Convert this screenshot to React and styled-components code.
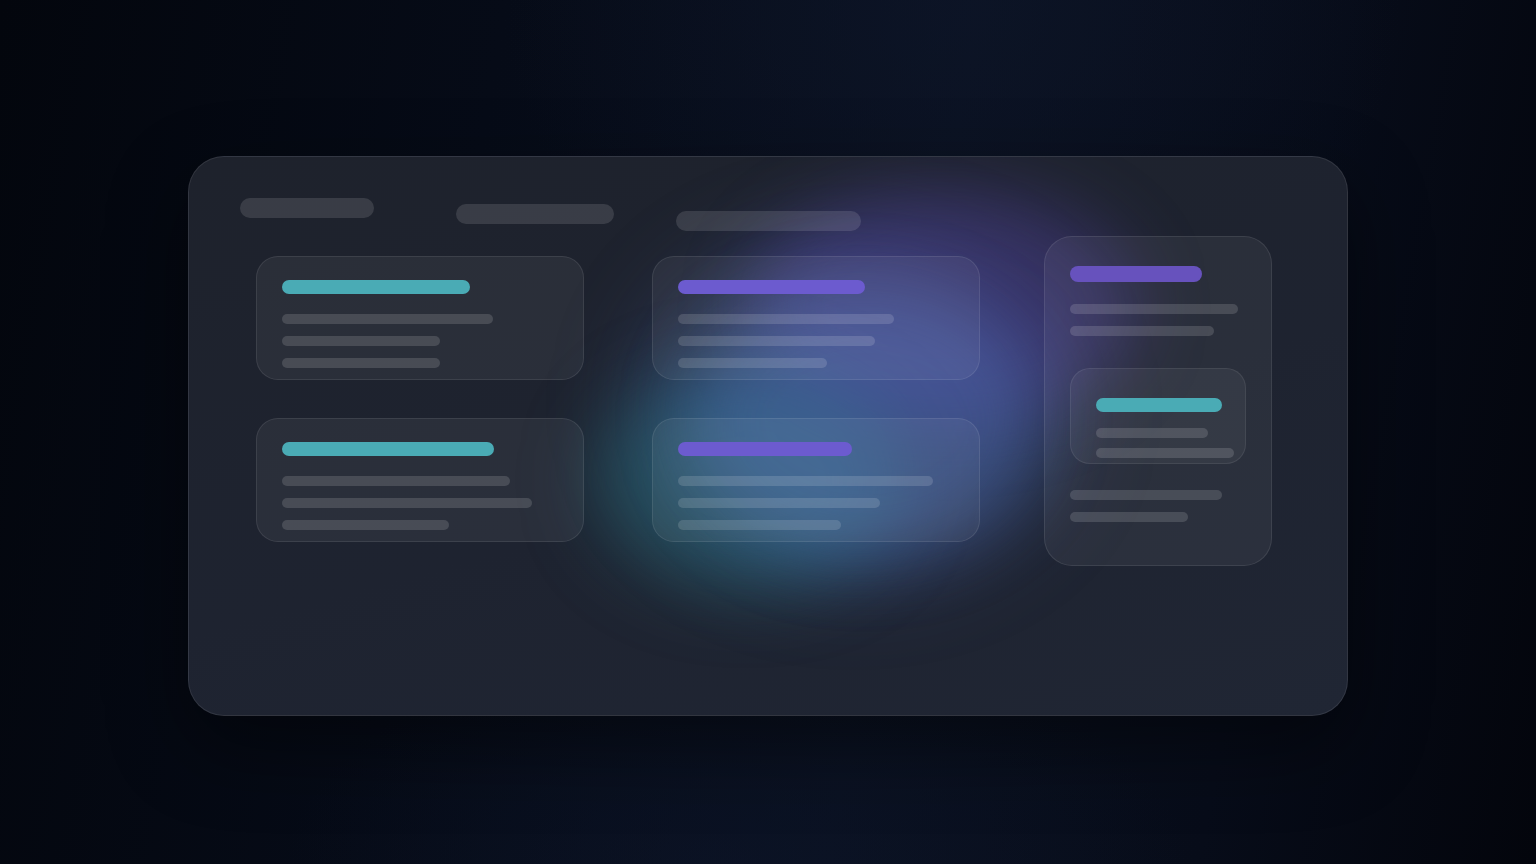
import React from 'react';
import styled, { createGlobalStyle } from 'styled-components';

const GlobalStyle = createGlobalStyle`
  html, body {
    margin: 0;
    padding: 0;
    height: 100%;
  }
  body {
    font-family: "Inter", "Liberation Sans", sans-serif;
    background: #050913;
  }
  #root {
    height: 100%;
  }
`;

const Page = styled.div`
  width: 100vw;
  height: 100vh;
  display: flex;
  align-items: center;
  justify-content: center;
  overflow: hidden;
  background:
    radial-gradient(ellipse 600px 500px at 62% 0%, rgba(14, 22, 42, 0.6), transparent 75%),
    radial-gradient(ellipse 600px 300px at 48% 100%, rgba(12, 20, 40, 0.6), transparent 75%),
    linear-gradient(100deg, #03060d 0%, #060b17 30%, #0a1120 58%, #070c19 80%, #03050c 100%);
`;

const Panel = styled.div`
  position: relative;
  box-sizing: border-box;
  width: 1160px;
  height: 560px;
  margin-top: 8px;
  padding: 41px 51px;
  border-radius: 36px;
  border: 1px solid rgba(255, 255, 255, 0.09);
  background: linear-gradient(165deg, #1e222c 0%, #1e2330 55%, #202634 100%);
  box-shadow: 0 30px 80px rgba(0, 0, 0, 0.45);
  overflow: hidden;
`;

const Glow = styled.div`
  position: absolute;
  border-radius: 50%;
  filter: blur(${p => p.$blur || 28}px);
  pointer-events: none;
  z-index: 0;
  left: ${p => p.$x}px;
  top: ${p => p.$y}px;
  width: ${p => p.$w}px;
  height: ${p => p.$h}px;
  background: ${p => p.$color};
`;

const Header = styled.div`
  position: relative;
  z-index: 1;
  display: flex;
  align-items: flex-start;
  height: 33px;
`;

const HeadPill = styled.div`
  width: ${p => p.$w}px;
  height: 20px;
  margin-left: ${p => p.$ml || 0}px;
  margin-top: ${p => p.$mt || 0}px;
  border-radius: 10px;
  background: rgba(255, 255, 255, 0.12);
`;

const Board = styled.div`
  position: relative;
  z-index: 1;
  display: flex;
  align-items: flex-start;
  margin-top: 5px;
  padding-left: 16px;
`;

const Column = styled.div`
  display: flex;
  flex-direction: column;
  gap: 38px;
  padding-top: ${p => p.$pt || 0}px;
  margin-left: ${p => p.$ml || 0}px;
`;

const Card = styled.div`
  box-sizing: border-box;
  width: 328px;
  height: 124px;
  padding: 23px 25px 0;
  border-radius: 22px;
  border: 1px solid rgba(255, 255, 255, 0.09);
  background: rgba(255, 255, 255, 0.055);
  display: flex;
  flex-direction: column;
`;

const TallCard = styled.div`
  box-sizing: border-box;
  width: 228px;
  height: 330px;
  padding: 29px 25px 0;
  border-radius: 28px;
  border: 1px solid rgba(255, 255, 255, 0.09);
  background: rgba(255, 255, 255, 0.055);
  display: flex;
  flex-direction: column;
`;

const InnerCard = styled.div`
  box-sizing: border-box;
  width: 176px;
  height: 96px;
  margin: 32px 0 26px;
  padding: 29px 25px 0;
  border-radius: 20px;
  border: 1px solid rgba(255, 255, 255, 0.08);
  background: rgba(255, 255, 255, 0.05);
  display: flex;
  flex-direction: column;
`;

const Title = styled.div`
  flex: none;
  width: ${p => p.$w}px;
  height: ${p => p.$h || 14}px;
  margin-bottom: ${p => p.$mb || 20}px;
  border-radius: 8px;
  background: ${p => (p.$tone === 'teal' ? '#4aabb5' : p.$tone === 'violet' ? '#6752bd' : '#6c5bcf')};
`;

const Lines = styled.div`
  display: flex;
  flex-direction: column;
  gap: ${p => p.$gap || 12}px;
`;

const Line = styled.div`
  width: ${p => p.$w}px;
  height: 10px;
  border-radius: 5px;
  background: rgba(255, 255, 255, 0.14);
`;

function TaskCard({ tone, title, lines }) {
  return (
    <Card>
      <Title $tone={tone} $w={title} />
      <Lines>
        {lines.map((w, i) => (
          <Line key={i} $w={w} />
        ))}
      </Lines>
    </Card>
  );
}

export default function App() {
  return (
    <>
      <GlobalStyle />
      <Page>
        <Panel>
          <Glow $x={440} $y={70} $w={450} $h={360} $blur={40} $color="rgba(72, 100, 172, 0.26)" />
          <Glow $x={560} $y={30} $w={390} $h={240} $blur={34} $color="rgba(98, 78, 196, 0.32)" />
          <Glow $x={404} $y={212} $w={310} $h={220} $blur={36} $color="rgba(44, 128, 142, 0.42)" />
          <Glow $x={500} $y={130} $w={350} $h={270} $blur={34} $color="rgba(82, 116, 190, 0.42)" />

          <Header>
            <HeadPill $w={134} />
            <HeadPill $w={158} $ml={82} $mt={6} />
            <HeadPill $w={185} $ml={62} $mt={13} />
          </Header>

          <Board>
            <Column $pt={20}>
              <TaskCard tone="teal" title={188} lines={[211, 158, 158]} />
              <TaskCard tone="teal" title={212} lines={[228, 250, 167]} />
            </Column>
            <Column $pt={20} $ml={68}>
              <TaskCard tone="purple" title={187} lines={[216, 197, 149]} />
              <TaskCard tone="purple" title={174} lines={[255, 202, 163]} />
            </Column>
            <Column $ml={64}>
              <TallCard>
                <Title $tone="violet" $w={132} $h={16} $mb={22} />
                <Lines>
                  <Line $w={168} />
                  <Line $w={144} />
                </Lines>
                <InnerCard>
                  <Title $tone="teal" $w={126} $mb={16} />
                  <Lines $gap={10}>
                    <Line $w={112} />
                    <Line $w={138} />
                  </Lines>
                </InnerCard>
                <Lines>
                  <Line $w={152} />
                  <Line $w={118} />
                </Lines>
              </TallCard>
            </Column>
          </Board>
        </Panel>
      </Page>
    </>
  );
}
